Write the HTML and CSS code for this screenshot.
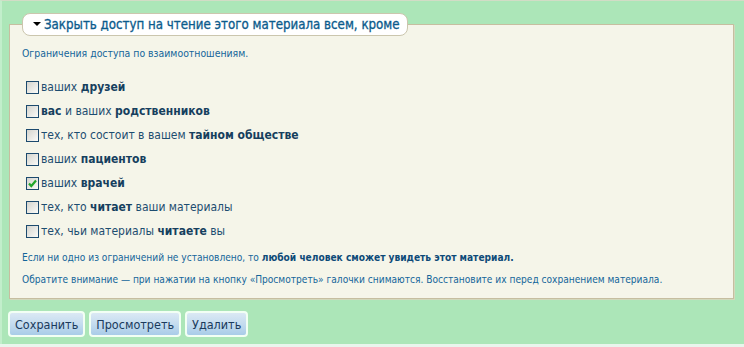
FILE: index.html
```html
<!DOCTYPE html>
<html lang="ru">
<head>
    <meta charset="UTF-8">
    <title>Доступ к материалу</title>
    <link rel="stylesheet" href="styles.css">
</head>
<body>

<div class="page">
    <fieldset class="access">
        <legend class="access-title"><span class="arrow"></span>Закрыть доступ на чтение этого материала всем, кроме</legend>

        <p class="intro">Ограничения доступа по взаимоотношениям.</p>

        <ul class="options">
            <li><span class="box"></span><span>ваших <b>друзей</b></span></li>
            <li><span class="box"></span><span><b>вас</b> и ваших <b>родственников</b></span></li>
            <li><span class="box"></span><span>тех, кто состоит в вашем <b>тайном обществе</b></span></li>
            <li><span class="box"></span><span>ваших <b>пациентов</b></span></li>
            <li><span class="box checked"><svg width="11" height="11" viewBox="0 0 11 11"><path d="M2 5.5 L4.3 8 L9 2.5" fill="none" stroke="#22a62a" stroke-width="2.2"/></svg></span><span>ваших <b>врачей</b></span></li>
            <li><span class="box"></span><span>тех, кто <b>читает</b> ваши материалы</span></li>
            <li><span class="box"></span><span>тех, чьи материалы <b>читаете</b> вы</span></li>
        </ul>

        <p class="note">Если ни одно из ограничений не установлено, то <b>любой человек сможет увидеть этот материал.</b></p>
        <p class="note second">Обратите внимание — при нажатии на кнопку «Просмотреть» галочки снимаются. Восстановите их перед сохранением материала.</p>
    </fieldset>

    <div class="buttons">
        <button>Сохранить</button>
        <button>Просмотреть</button>
        <button>Удалить</button>
    </div>
</div>

</body>
</html>
```

FILE: styles.css
```css
body {
    margin: 0;
    background: #e9f5ec;
    font-family: "DejaVu Sans Condensed", "DejaVu Sans", sans-serif;
}
.page {
    height: 344px;
    padding: 12px 0 0 0;
    box-sizing: border-box;
    background: #ace6b8;
    border-top: 1px solid #d2dcc6;
    border-left: 2px solid #c2eecb;
}
.access {
    margin: 0 10px 0 7px;
    padding: 10px 12px 11px 12px;
    border: 1px solid #c6bea0;
    box-shadow: 1px 1px 0 #d2d8bc;
    background: #f5f5e9;
}
.access-title {
    height: 23px;
    box-sizing: border-box;
    padding: 0 7px 0 10px;
    border: 1px solid #cbc6ae;
    border-radius: 8px;
    background: #ffffff;
    color: #0b5b8c;
    font-size: 13.2px;
    line-height: 21px;
    -webkit-text-stroke: 0.3px #0b5b8c;
}
.arrow {
    display: inline-block;
    width: 0;
    height: 0;
    margin-right: 3px;
    vertical-align: 3px;
    border-left: 4px solid transparent;
    border-right: 4px solid transparent;
    border-top: 4px solid #000000;
}
.intro {
    margin: 0;
    font-size: 10.4px;
    line-height: 14px;
    color: #14659a;
}
.options {
    list-style: none;
    margin: 15px 0 0 4px;
    padding: 0;
}
.options li {
    display: flex;
    align-items: center;
    height: 24px;
    font-size: 12px;
    color: #1d4d70;
}
.options b {
    color: #163f5e;
}
.box {
    display: inline-flex;
    align-items: center;
    justify-content: center;
    width: 13px;
    height: 13px;
    box-sizing: border-box;
    margin-right: 2px;
    border: 1px solid #1c4a6e;
    background: linear-gradient(135deg, #d4d4ce, #fbfbf8);
}
.note {
    margin: 8px 0 0 0;
    font-size: 10.1px;
    line-height: 14px;
    color: #14659a;
}
.note b {
    color: #0d4a78;
}
.buttons {
    display: flex;
    gap: 4px;
    margin: 12px 0 0 6px;
}
.buttons button {
    height: 26px;
    padding: 0 5px;
    border: 2px solid #f2fff4;
    border-radius: 4px;
    background: linear-gradient(#dbe9f4, #c4dcef 50%, #a9cce8);
    color: #1a3a5c;
    font-family: "DejaVu Sans Condensed", "DejaVu Sans", sans-serif;
    font-size: 12.5px;
    cursor: pointer;
}
```
